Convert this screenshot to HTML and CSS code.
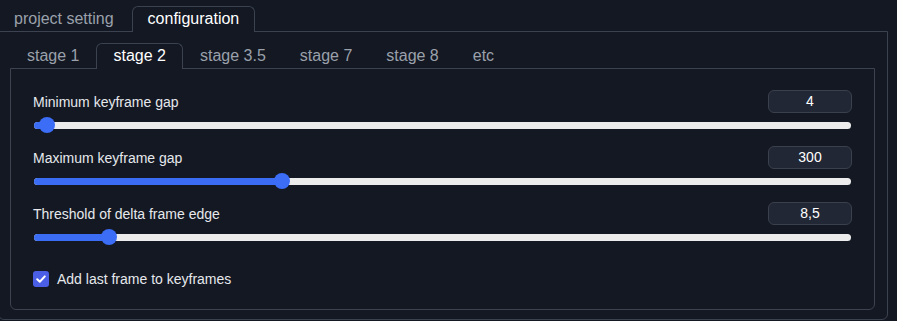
FILE: index.html
```html
<!DOCTYPE html>
<html>
<head>
<meta charset="utf-8">
<link rel="stylesheet" href="styles.css">
</head>
<body>
<div class="outer">
  <div class="tabs">
    <div class="tab">project setting</div>
    <div class="tab active">configuration</div>
  </div>
  <div class="panel">
    <div class="tabs inner-tabs">
      <div class="tab">stage 1</div>
      <div class="tab active">stage 2</div>
      <div class="tab">stage 3.5</div>
      <div class="tab">stage 7</div>
      <div class="tab">stage 8</div>
      <div class="tab">etc</div>
    </div>
    <div class="inner">
      <div class="field">
        <div class="head">
          <span class="label">Minimum keyframe gap</span>
          <div class="value">4</div>
        </div>
        <div class="slider"><div class="track" style="--v:0.006"><div class="fill"></div><div class="thumb"></div></div></div>
      </div>
      <div class="field">
        <div class="head">
          <span class="label">Maximum keyframe gap</span>
          <div class="value">300</div>
        </div>
        <div class="slider"><div class="track" style="--v:0.2996"><div class="fill"></div><div class="thumb"></div></div></div>
      </div>
      <div class="field">
        <div class="head">
          <span class="label">Threshold of delta frame edge</span>
          <div class="value">8,5</div>
        </div>
        <div class="slider"><div class="track" style="--v:0.0836"><div class="fill"></div><div class="thumb"></div></div></div>
      </div>
      <label class="check">
        <span class="box"><svg width="16" height="16" viewBox="0 0 16 16"><polyline points="4.2,8.2 6.8,10.8 11.8,5.4" fill="none" stroke="#fff" stroke-width="2" stroke-linecap="round" stroke-linejoin="round"/></svg></span>
        <span class="label">Add last frame to keyframes</span>
      </label>
    </div>
  </div>
</div>
</body>
</html>
```
FILE: styles.css
```css
html, body {
  margin: 0;
  padding: 0;
  background: #131823;
  overflow: hidden;
}
body {
  padding-top: 6px;
  font-family: "Liberation Sans", Arial, sans-serif;
}
.outer {
  margin-left: -2px;
  width: 890px;
}
.tabs {
  display: flex;
  gap: 2px;
  position: relative;
  z-index: 1;
}
.tab {
  box-sizing: border-box;
  height: 26px;
  padding: 0 15px;
  border: 1px solid transparent;
  border-bottom: none;
  border-radius: 6px 6px 0 0;
  font-size: 16px;
  line-height: 24px;
  color: #9ba1ab;
  margin-bottom: -1px;
  white-space: nowrap;
}
.tab.active {
  border-color: #3c424f;
  background: #131823;
  color: #ffffff;
}
.panel {
  border: 1px solid #3c424f;
  border-radius: 0 0 6px 6px;
  padding: 11px 12px 9px 11px;
}
.inner-tabs {
  gap: 0;
}
.inner-tabs .tab {
  padding: 0 16px;
}
.inner {
  border: 1px solid #3c424f;
  border-radius: 0 0 6px 6px;
  padding: 21px 22px 22px 21px;
}
.field {
  margin-bottom: 9px;
}
.field:last-of-type {
  margin-bottom: 0;
}
.head {
  display: flex;
  justify-content: space-between;
  align-items: center;
  height: 23px;
}
.label {
  font-size: 14px;
  color: #e6e8ec;
  margin-left: 1px;
}
.value {
  box-sizing: border-box;
  width: 84px;
  height: 23px;
  border: 1px solid #3a404c;
  border-radius: 6px;
  background: #222735;
  color: #ffffff;
  font-size: 14px;
  line-height: 21px;
  text-align: center;
}
.slider {
  height: 24px;
  display: flex;
  align-items: center;
  margin: 0 1px 0 2px;
}
.track {
  position: relative;
  flex: 1;
  height: 7px;
  border-radius: 4px;
  background: #ececec;
}
.fill {
  height: 100%;
  border-radius: 4px 0 0 4px;
  background: #3b6cf4;
  width: calc(var(--v) * (100% - 16px) + 8px);
}
.thumb {
  position: absolute;
  top: 50%;
  left: calc(var(--v) * (100% - 16px));
  width: 16px;
  height: 16px;
  margin-top: -8px;
  border-radius: 50%;
  background: #3b6df6;
}
.check {
  display: flex;
  align-items: center;
  gap: 8px;
  margin-top: 22px;
  height: 16px;
}
.box {
  width: 16px;
  height: 16px;
  border-radius: 3px;
  background: #4a5fe6;
  margin-left: 1px;
  display: block;
}
.box svg {
  display: block;
}
.check .label {
  margin-left: 0;
}
```
